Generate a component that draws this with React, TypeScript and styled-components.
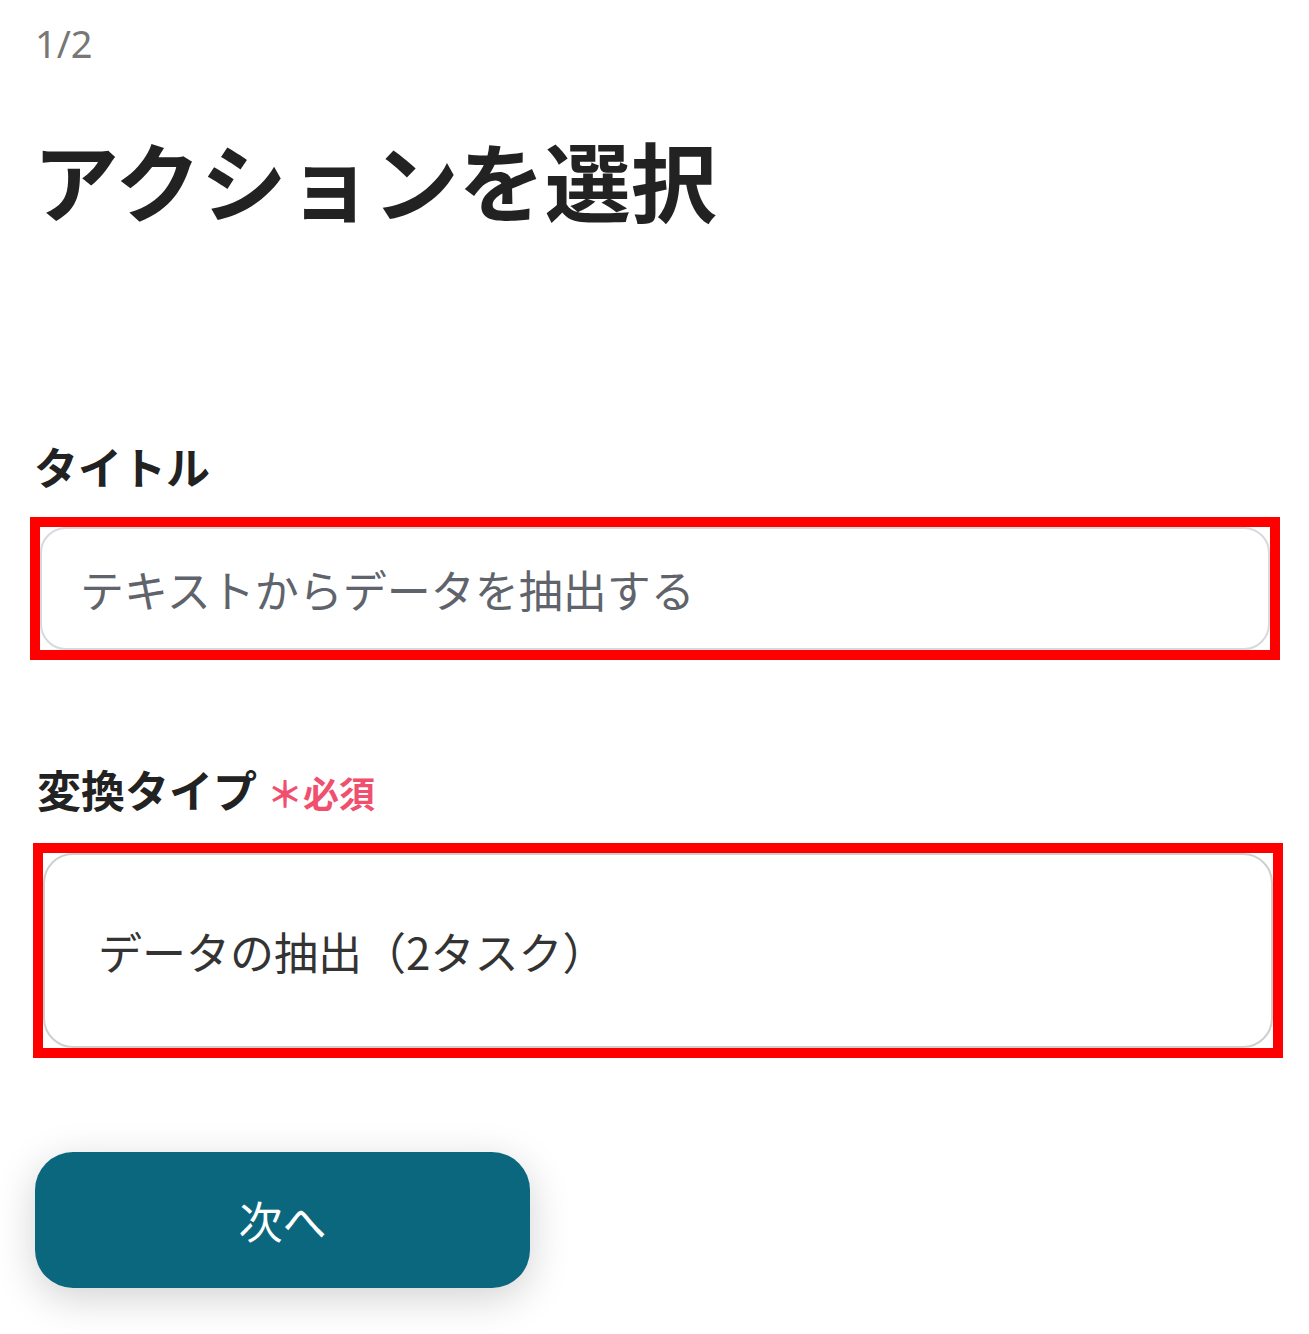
import React from "react";
import styled, { createGlobalStyle } from "styled-components";

const GlobalStyle = createGlobalStyle`
  body {
    margin: 0;
    background: #ffffff;
    font-family: "Noto Sans CJK JP", "Noto Sans", sans-serif;
  }
`;

const Page = styled.div`
  display: flex;
  flex-direction: column;
  align-items: flex-start;
  padding: 24px 0 60px 30px;
`;

const Step = styled.div`
  font-family: "Noto Sans", "Noto Sans CJK JP", sans-serif;
  font-size: 38px;
  line-height: 38px;
  color: #777;
  margin-left: 5px;
`;

const Title = styled.h1`
  margin: 65px 0 0 3px;
  font-size: 86px;
  line-height: 103px;
  font-weight: 700;
  color: #222;
`;

const Field = styled.div<{ $top: number; $shift: number }>`
  display: flex;
  flex-direction: column;
  gap: 24px;
  margin-top: ${({ $top }) => $top}px;
  margin-left: ${({ $shift }) => $shift}px;
`;

const Label = styled.div`
  display: flex;
  align-items: baseline;
  gap: 10px;
  margin-left: 4px;
  font-size: 44px;
  line-height: 53px;
  font-weight: 700;
  color: #222;
`;

const Required = styled.span`
  font-size: 36px;
  font-weight: 700;
  color: #f0506e;
`;

const Highlight = styled.div<{ $height: number }>`
  box-sizing: border-box;
  width: 1250px;
  height: ${({ $height }) => $height}px;
  border: 10px solid #ff0000;
  display: flex;
`;

const TextInput = styled.input`
  flex: 1;
  box-sizing: border-box;
  border: 2px solid #d6d9de;
  border-radius: 26px;
  padding: 0 0 0 38px;
  font-family: "Noto Sans CJK JP", sans-serif;
  font-size: 44px;
  color: #333;
  outline: none;
  background: #fff;

  &::placeholder {
    color: #5f636b;
  }
`;

const SelectBox = styled.div`
  flex: 1;
  display: flex;
  align-items: center;
  box-sizing: border-box;
  border: 2px solid #cfcfcf;
  border-radius: 30px;
  padding-left: 53px;
  font-size: 44px;
  color: #333;
  background: #fff;
`;

const NextButton = styled.button`
  margin: 94px 0 0 5px;
  width: 495px;
  height: 136px;
  border: none;
  border-radius: 38px;
  background: #0b677e;
  color: #fff;
  font-family: "Noto Sans CJK JP", sans-serif;
  font-size: 44px;
  box-shadow: 0 10px 40px rgba(0, 0, 0, 0.18);
  cursor: pointer;
`;

export default function App() {
  return (
    <>
      <GlobalStyle />
      <Page>
        <Step>1/2</Step>
        <Title>アクションを選択</Title>
        <Field $top={210} $shift={0}>
          <Label>タイトル</Label>
          <Highlight $height={143}>
            <TextInput placeholder="テキストからデータを抽出する" />
          </Highlight>
        </Field>
        <Field $top={103} $shift={3}>
          <Label>
            変換タイプ<Required>＊必須</Required>
          </Label>
          <Highlight $height={215}>
            <SelectBox>データの抽出（2タスク）</SelectBox>
          </Highlight>
        </Field>
        <NextButton>次へ</NextButton>
      </Page>
    </>
  );
}
